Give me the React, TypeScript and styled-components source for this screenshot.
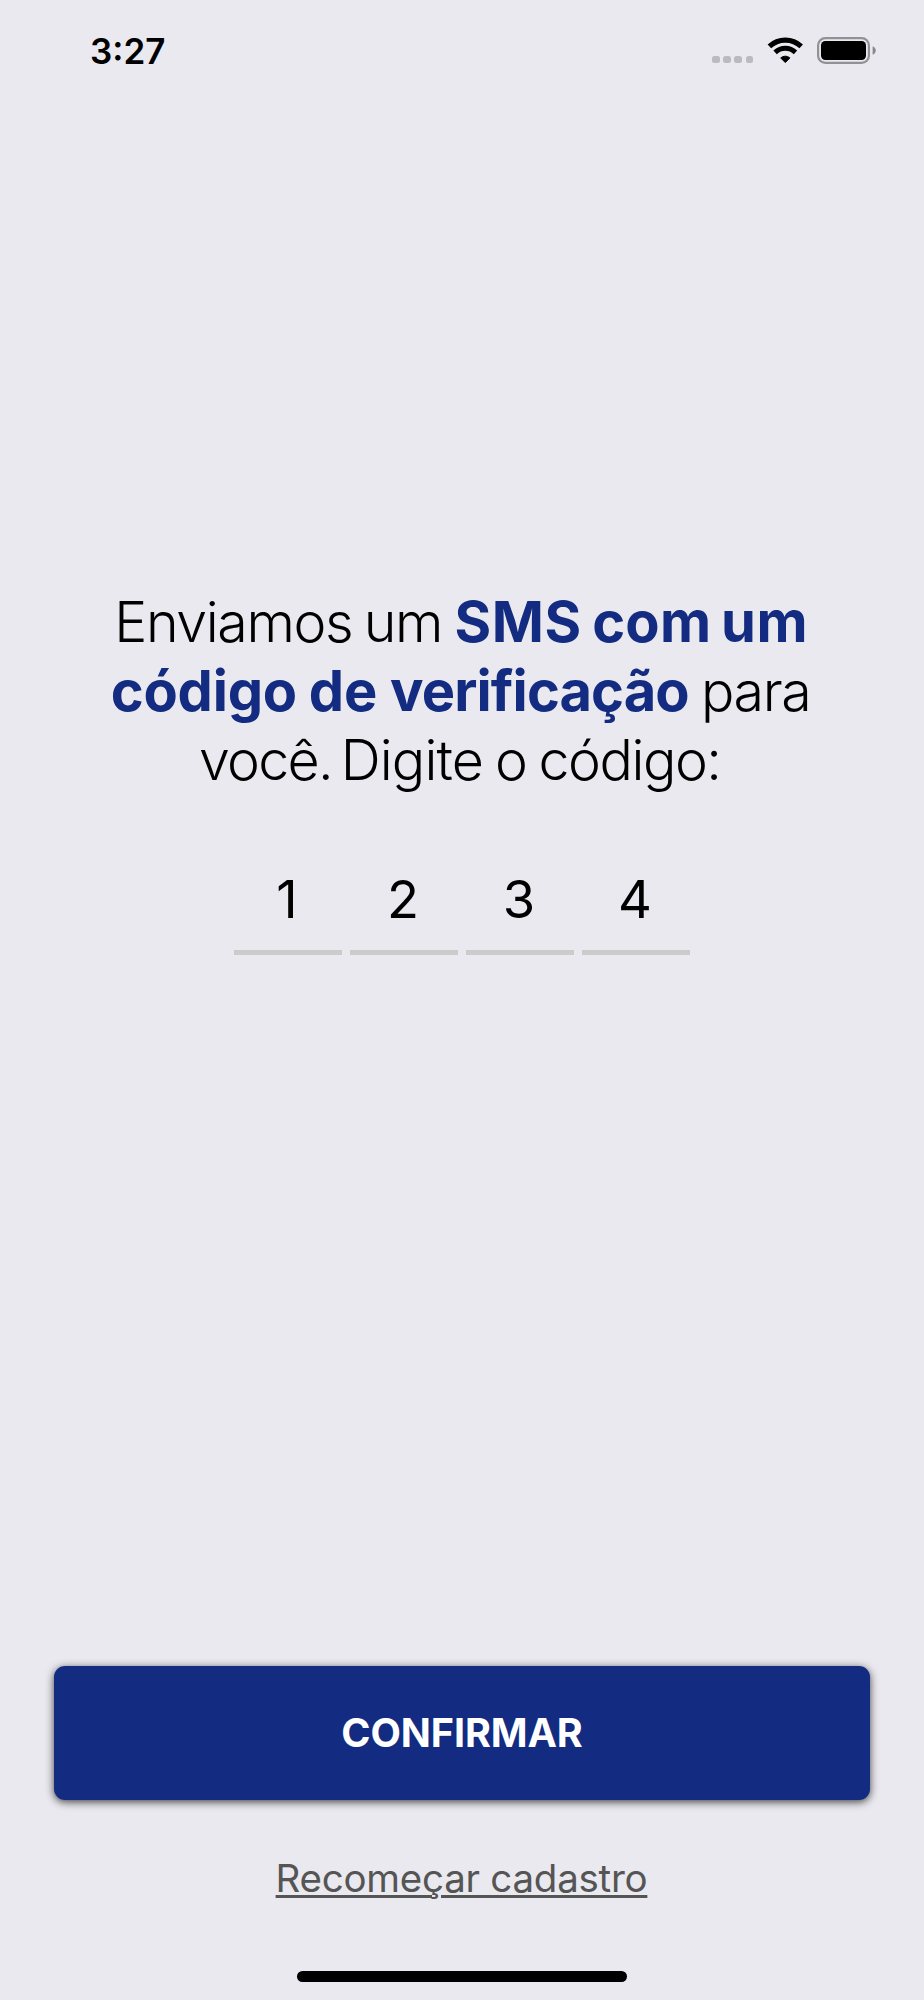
import React from 'react';
import styled, { css, createGlobalStyle } from 'styled-components';

const GlobalStyle = createGlobalStyle`
  body {
    margin: 0;
    background: #e9e9ef;
    font-family: Inter, 'Liberation Sans', sans-serif;
    color: #000;
  }
`;

const Screen = styled.div`
  box-sizing: border-box;
  display: flex;
  flex-direction: column;
  align-items: center;
  width: 100%;
  height: 2000px;
  padding-bottom: 18px;
  overflow: hidden;
`;

const StatusBar = styled.header`
  box-sizing: border-box;
  display: flex;
  justify-content: space-between;
  align-items: center;
  width: 100%;
  height: 102px;
  padding: 0 48px 0 90px;
`;

const Clock = styled.time`
  font-size: 35px;
  line-height: 42px;
  font-weight: 600;
`;

const StatusIcons = styled.div`
  display: flex;
  align-items: center;
  margin-bottom: 2px;
`;

const SignalDots = styled.div`
  display: flex;
  gap: 3.6px;
  margin: 19px 14px 0 0;
`;

const SignalDot = styled.span`
  width: 7.5px;
  height: 7.5px;
  border-radius: 2.5px;
  background: #bbbbbf;
`;

const WifiIcon = styled.svg`
  width: 37px;
  height: 27px;
  margin-right: 13px;
`;

const BatteryIcon = styled.svg`
  width: 59px;
  height: 27px;
`;

const Message = styled.h1`
  margin: 484.5px 0 0;
  font-size: 55.5px;
  line-height: 69.2px;
  font-weight: 300;
  letter-spacing: -1.7px;
  text-align: center;
  white-space: nowrap;
`;

const Line = styled.span<{ $inset: number }>`
  display: block;
  padding-right: ${(p) => p.$inset}px;
`;

const Word = styled.span<{ $tracking: number; $kern?: number; $strong?: boolean }>`
  margin-left: ${(p) => p.$kern ?? 0}px;
  letter-spacing: ${(p) => p.$tracking}px;
  ${(p) =>
    p.$strong &&
    css`
      font-size: 56px;
      line-height: 1;
      font-weight: 700;
      color: #132b81;
    `}
`;

const CodeFields = styled.div`
  display: flex;
  gap: 8.5px;
  margin-top: 59.5px;
`;

const CodeField = styled.div`
  box-sizing: border-box;
  display: flex;
  justify-content: center;
  width: 107.5px;
  height: 101.5px;
  padding: 14.5px 2px 0 0;
  border-bottom: 5px solid #cbcbcb;
  font-size: 52.5px;
  line-height: 62px;
`;

const ConfirmButton = styled.button`
  width: 816px;
  height: 134px;
  margin-top: auto;
  padding: 0;
  border: 0;
  border-radius: 11px;
  background: #132b81;
  box-shadow: 0 2px 8px rgba(0, 0, 0, 0.72);
  color: #fff;
  font: 700 39.5px/48px Inter, 'Liberation Sans', sans-serif;
  letter-spacing: -0.1px;
`;

const RestartLink = styled.a`
  margin: 54px 1px 0 0;
  font-size: 38.5px;
  line-height: 48px;
  letter-spacing: -0.25px;
  color: #555;
  text-decoration: underline;
  text-decoration-thickness: 3px;
  text-underline-offset: 3px;
`;

const HomeIndicator = styled.div`
  width: 330px;
  height: 11px;
  margin-top: 69px;
  border-radius: 6px;
  background: #000;
`;

const digits = ['1', '2', '3', '4'];

export default function App() {
  return (
    <Screen>
      <GlobalStyle />
      <StatusBar>
        <Clock>3:27</Clock>
        <StatusIcons>
          <SignalDots>
            <SignalDot />
            <SignalDot />
            <SignalDot />
            <SignalDot />
          </SignalDots>
          <WifiIcon viewBox="0 0 37 27" fill="none" stroke="#000" aria-hidden>
            <path d="M2.4 9.3A23.3 23.3 0 0 1 34.2 9.3" strokeWidth="5.2" />
            <path d="M8.1 15.3A15 15 0 0 1 28.5 15.3" strokeWidth="5" />
            <path
              d="M18.3 25.6L13.7 20.9A7 7 0 0 1 22.9 20.9Z"
              fill="#000"
              strokeWidth="1"
              strokeLinejoin="round"
            />
          </WifiIcon>
          <BatteryIcon viewBox="0 0 59 27" aria-hidden>
            <rect x="1.1" y="1.1" width="50.8" height="24.8" rx="7.2" fill="none" stroke="#929296" strokeWidth="2.2" />
            <rect x="4" y="4" width="45" height="19" rx="4.4" fill="#000" />
            <path d="M55.6 9.2C59.8 10.8 59.8 16.2 55.6 17.8Z" fill="#88888c" />
          </BatteryIcon>
        </StatusIcons>
      </StatusBar>

      <Message>
        <Line $inset={1.6}>
          <Word $tracking={-1.4}>Enviamos</Word>{' '}
          <Word $tracking={-1.4} $kern={-2.4}>um</Word>{' '}
          <Word $strong $tracking={0.5} $kern={-1.4}>SMS</Word>{' '}
          <Word $strong $tracking={0.2} $kern={-3.3}>com</Word>{' '}
          <Word $strong $tracking={0.5} $kern={-4}>um</Word>
        </Line>
        <Line $inset={3}>
          <Word $strong $tracking={-0.2}>código</Word>{' '}
          <Word $strong $tracking={0} $kern={-2.2}>de</Word>{' '}
          <Word $strong $tracking={-0.9} $kern={-1.3}>verificação</Word>{' '}
          <Word $tracking={-1.4} $kern={-1.7}>para</Word>
        </Line>
        <Line $inset={4.5}>
          <Word $tracking={-1.7}>você.</Word>{' '}
          <Word $tracking={-0.85} $kern={-5.2}>Digite</Word>{' '}
          <Word $tracking={-1.7} $kern={-2}>o</Word>{' '}
          <Word $tracking={-1.45} $kern={-1.8}>código:</Word>
        </Line>
      </Message>

      <CodeFields>
        {digits.map((digit) => (
          <CodeField key={digit}>{digit}</CodeField>
        ))}
      </CodeFields>

      <ConfirmButton>CONFIRMAR</ConfirmButton>
      <RestartLink>Recomeçar cadastro</RestartLink>
      <HomeIndicator />
    </Screen>
  );
}
